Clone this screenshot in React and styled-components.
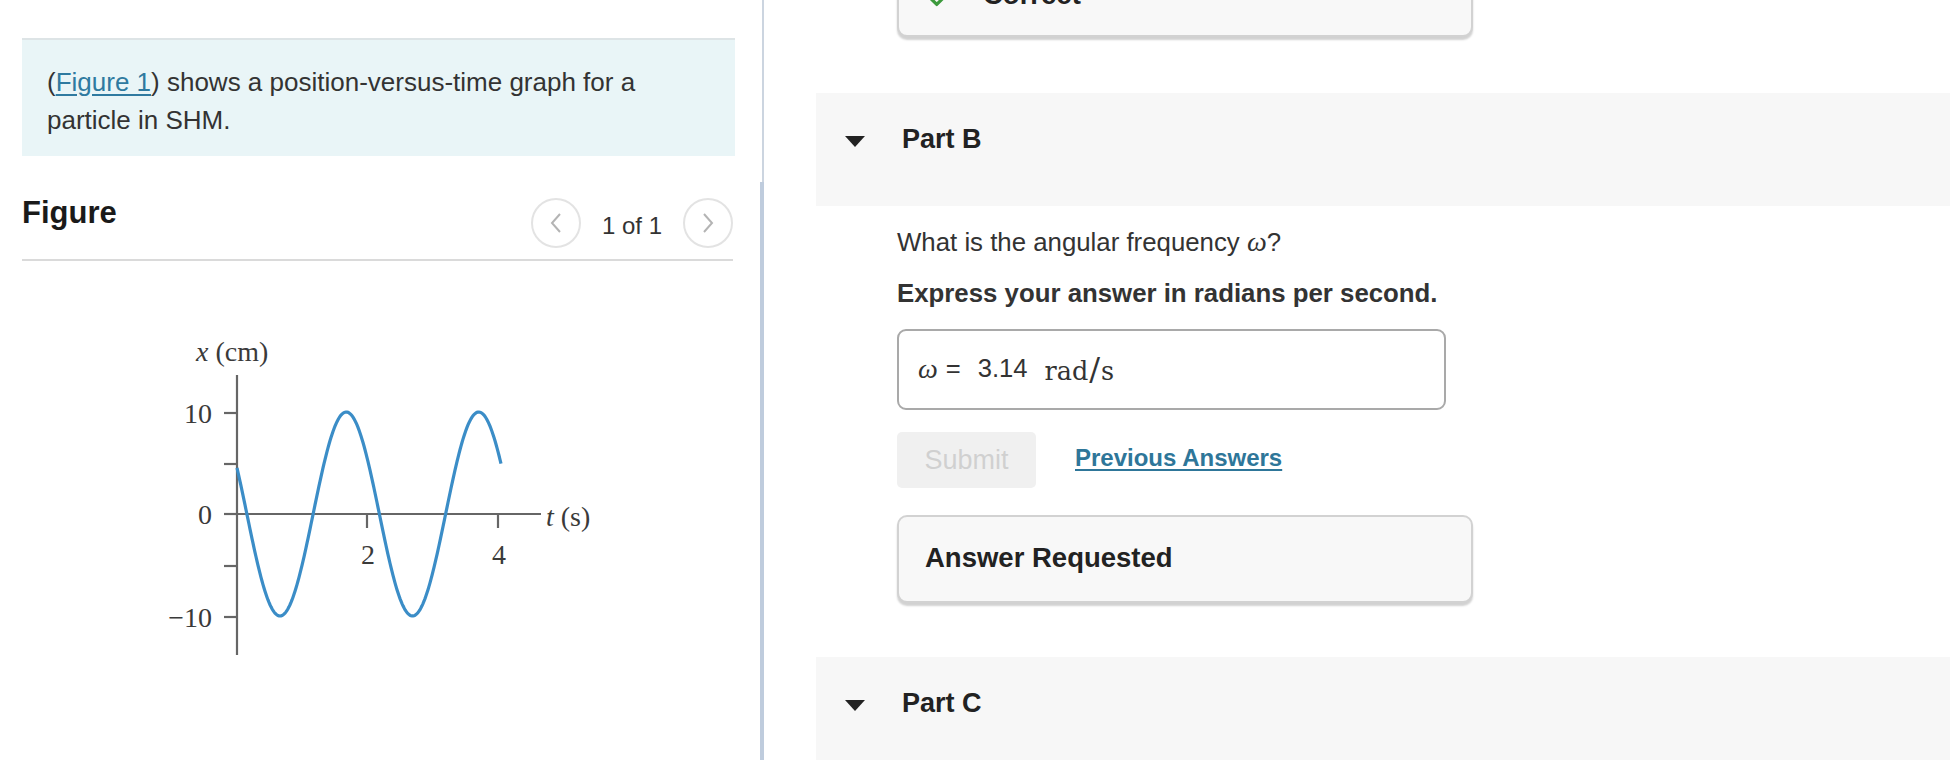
import React from 'react';
import styled, { createGlobalStyle } from 'styled-components';
import { Check } from 'lucide-react';

const GlobalStyle = createGlobalStyle`
  html, body {
    margin: 0;
    padding: 0;
    background: #fff;
  }
  body {
    font-family: "Liberation Sans", Arial, sans-serif;
    color: #333;
  }
  * {
    box-sizing: border-box;
  }
`;

// Page shell: figure pane, scrollbar, question pane
const Page = styled.div`
  display: flex;
  height: 760px;
  overflow: hidden;
`;

const LeftPane = styled.div`
  width: 760px;
  flex-shrink: 0;
  padding: 38px 25px 0 22px;
`;

const Intro = styled.div`
  background: #e9f5f7;
  border-top: 2px solid #dde4e6;
  padding: 23px 25px 17px;
  font-size: 26px;
  line-height: 38px;
  color: #333;
`;

const Link = styled.a`
  color: #2f7aa0;
  text-decoration: underline;
  text-underline-offset: 3px;
  cursor: pointer;
`;

const FigureHeader = styled.div`
  display: flex;
  justify-content: space-between;
  align-items: flex-start;
  margin-top: 39px;
  margin-right: 2px;
  padding-bottom: 11px;
  border-bottom: 2px solid #dadada;
`;

const FigureTitle = styled.h2`
  margin: 0;
  font-size: 31px;
  line-height: 35.6px;
  font-weight: bold;
  color: #1a1a1a;
`;

const Pager = styled.div`
  display: flex;
  align-items: center;
  gap: 21px;
  margin-top: 3px;
`;

const PagerButton = styled.button`
  width: 50px;
  height: 50px;
  padding: 0;
  border-radius: 50%;
  border: 2px solid #e3e3e3;
  background: #fff;
  display: flex;
  align-items: center;
  justify-content: center;
`;

const PagerLabel = styled.span`
  font-size: 24px;
  color: #333;
  padding-top: 6px;
`;

const GraphWrap = styled.div`
  display: flex;
  justify-content: center;
  margin-top: 69px;
`;

const AxisText = styled.text`
  font-family: "Liberation Serif", "Times New Roman", serif;
  font-size: 28px;
  fill: #3a3a3a;
`;

const Scrollbar = styled.div`
  width: 4px;
  flex-shrink: 0;
  display: flex;
  flex-direction: column;
  align-items: flex-end;
`;

const ScrollTrack = styled.div`
  width: 2px;
  height: 182px;
  background: #ccd5e0;
`;

const ScrollThumb = styled.div`
  width: 4px;
  flex: 1;
  background: #bfccdd;
`;

const RightPane = styled.div`
  flex: 1;
  padding-left: 52px;
`;

const Block = styled.div`
  margin-left: 81px;
  width: 576px;
`;

const FeedbackBox = styled.div`
  display: flex;
  align-items: flex-start;
  width: 576px;
  height: ${p => p.$height || 88}px;
  margin-top: ${p => p.$mt || 0}px;
  padding: 24px 26px 0;
  border: 2px solid #d2d2d2;
  border-radius: 10px;
  background: #f8f8f8;
  box-shadow: 0 3px 2px rgba(0, 0, 0, 0.18);
  font-size: 27.5px;
  line-height: 33px;
  font-weight: bold;
  color: #222;
`;

const FeedbackIcon = styled.span`
  display: flex;
  margin: 8px 30px 0 2px;
  color: #3d9a3d;
`;

const PartHeader = styled.div`
  display: flex;
  align-items: flex-start;
  height: 113px;
  margin-top: ${p => p.$mt}px;
  padding: 30px 0 0 29px;
  background: #f7f7f7;
`;

const Caret = styled.svg`
  margin-top: 13px;
  flex-shrink: 0;
`;

const PartTitle = styled.h3`
  margin: 0 0 0 37px;
  font-size: 27px;
  line-height: 32.4px;
  font-weight: bold;
  color: #222;
`;

const Prompt = styled.p`
  margin: ${p => p.$mt}px 0 0;
  font-size: 25.8px;
  line-height: 30.7px;
  font-weight: ${p => (p.$bold ? 'bold' : 'normal')};
  color: #333;
`;

const MathVar = styled.span`
  font-family: "Liberation Serif", "Times New Roman", serif;
  font-style: italic;
  font-size: 28px;
`;

const AnswerField = styled.div`
  display: flex;
  align-items: center;
  width: 549px;
  height: 81px;
  margin-top: 21px;
  padding: 0 0 2px 19px;
  border: 2px solid #a9a9a9;
  border-radius: 9px;
  font-size: 25.6px;
  color: #333;
`;

const Equals = styled.span`
  margin-left: 8px;
`;

const Value = styled.span`
  margin-left: 17px;
`;

const Unit = styled.span`
  margin-left: 17px;
  font-family: "DejaVu Serif", "Liberation Serif", serif;
  font-size: 25.5px;
`;

const Slash = styled.span`
  font-size: 32px;
  margin: 0 1px;
`;

const ActionRow = styled.div`
  display: flex;
  align-items: center;
  margin-top: 22px;
`;

const SubmitButton = styled.button`
  width: 139px;
  height: 56px;
  border: none;
  border-radius: 5px;
  background: #f0f0f0;
  color: #d0d0d0;
  font-family: inherit;
  font-size: 27px;
`;

const HistoryLink = styled.a`
  margin-left: 39px;
  padding-bottom: 5px;
  font-size: 24px;
  font-weight: bold;
  color: #2e7699;
  text-decoration: underline;
  text-underline-offset: 3px;
  cursor: pointer;
`;

// x(t) = A cos(wt + phi), drawn in pixel space of the figure
const curvePath = (() => {
  const pts = [];
  for (let X = 88; X <= 352; X += 1) {
    const y = 184 + 102 * Math.cos((2 * Math.PI * (X - 131)) / 132.5);
    pts.push(`${X},${y.toFixed(2)}`);
  }
  return 'M' + pts.join(' L');
})();

const Chevron = ({ dir }) => (
  <svg width="16" height="24" viewBox="0 0 16 24">
    <polyline
      points={dir === 'left' ? '12,3 4,12 12,21' : '4,3 12,12 4,21'}
      fill="none"
      stroke="#b4b4b4"
      strokeWidth="2"
    />
  </svg>
);

const Graph = () => (
  <svg width="460" height="340" viewBox="0 0 460 340">
    <AxisText x="47" y="31">
      <tspan fontStyle="italic">x</tspan> (cm)
    </AxisText>
    <g stroke="#666" strokeWidth="2.2">
      <line x1="88" y1="45" x2="88" y2="325" />
      <line x1="75" y1="184" x2="392" y2="184" />
      {[83, 134, 184, 236, 287].map(y => (
        <line key={y} x1="75" y1={y} x2="88" y2={y} />
      ))}
      <line x1="218" y1="184" x2="218" y2="198" />
      <line x1="349" y1="184" x2="349" y2="198" />
    </g>
    <path d={curvePath} fill="none" stroke="#3b8dc7" strokeWidth="3.2" />
    <AxisText x="63" y="93" textAnchor="end">10</AxisText>
    <AxisText x="63" y="194" textAnchor="end">0</AxisText>
    <AxisText x="63" y="297" textAnchor="end">−10</AxisText>
    <AxisText x="219" y="234" textAnchor="middle">2</AxisText>
    <AxisText x="350" y="234" textAnchor="middle">4</AxisText>
    <AxisText x="397" y="196">
      <tspan fontStyle="italic">t</tspan> (s)
    </AxisText>
  </svg>
);

const App = () => (
  <>
    <GlobalStyle />
    <Page>
      <LeftPane>
        <Intro>
          (<Link>Figure 1</Link>) shows a position-versus-time graph for a
          particle in SHM.
        </Intro>
        <FigureHeader>
          <FigureTitle>Figure</FigureTitle>
          <Pager>
            <PagerButton aria-label="previous">
              <Chevron dir="left" />
            </PagerButton>
            <PagerLabel>1 of 1</PagerLabel>
            <PagerButton aria-label="next">
              <Chevron dir="right" />
            </PagerButton>
          </Pager>
        </FigureHeader>
        <GraphWrap>
          <Graph />
        </GraphWrap>
      </LeftPane>

      <Scrollbar>
        <ScrollTrack />
        <ScrollThumb />
      </Scrollbar>

      <RightPane>
        <Block>
          <FeedbackBox $mt={-48} $height={85}>
            <FeedbackIcon>
              <Check size={26} strokeWidth={3} />
            </FeedbackIcon>
            Correct
          </FeedbackBox>
        </Block>

        <PartHeader $mt={56}>
          <Caret width="20" height="11" viewBox="0 0 20 11">
            <polygon points="0,0 20,0 10,11" fill="#222" />
          </Caret>
          <PartTitle>Part B</PartTitle>
        </PartHeader>

        <Block>
          <Prompt $mt={21}>
            What is the angular frequency <MathVar>ω</MathVar>?
          </Prompt>
          <Prompt $mt={20} $bold>
            Express your answer in radians per second.
          </Prompt>
          <AnswerField>
            <MathVar>ω</MathVar>
            <Equals>=</Equals>
            <Value>3.14</Value>
            <Unit>
              rad<Slash>/</Slash>s
            </Unit>
          </AnswerField>
          <ActionRow>
            <SubmitButton disabled>Submit</SubmitButton>
            <HistoryLink>Previous Answers</HistoryLink>
          </ActionRow>
          <FeedbackBox $mt={27}>Answer Requested</FeedbackBox>
        </Block>

        <PartHeader $mt={54}>
          <Caret width="20" height="11" viewBox="0 0 20 11">
            <polygon points="0,0 20,0 10,11" fill="#222" />
          </Caret>
          <PartTitle>Part C</PartTitle>
        </PartHeader>
      </RightPane>
    </Page>
  </>
);

export default App;
